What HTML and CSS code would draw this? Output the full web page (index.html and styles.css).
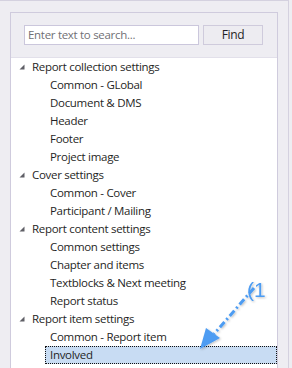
FILE: index.html
```html
<!DOCTYPE html>
<html>
<head>
<meta charset="utf-8">
<link rel="stylesheet" href="styles.css">
</head>
<body>
<div class="frame">
  <div class="panel">
    <div class="search">
      <div class="input">Enter text to search...</div>
      <div class="btn">Find</div>
    </div>
    <div class="tree">
      <div class="row parent"><span class="tri"><svg width="6" height="6" viewBox="0 0 6 6"><polygon points="5.5,0.5 5.5,5.5 0.5,5.5" fill="#5f5f66"/></svg></span>Report collection settings</div>
      <div class="row child">Common - GLobal</div>
      <div class="row child">Document &amp; DMS</div>
      <div class="row child">Header</div>
      <div class="row child">Footer</div>
      <div class="row child">Project image</div>
      <div class="row parent"><span class="tri"><svg width="6" height="6" viewBox="0 0 6 6"><polygon points="5.5,0.5 5.5,5.5 0.5,5.5" fill="#5f5f66"/></svg></span>Cover settings</div>
      <div class="row child">Common - Cover</div>
      <div class="row child">Participant / Mailing</div>
      <div class="row parent"><span class="tri"><svg width="6" height="6" viewBox="0 0 6 6"><polygon points="5.5,0.5 5.5,5.5 0.5,5.5" fill="#5f5f66"/></svg></span>Report content settings</div>
      <div class="row child">Common settings</div>
      <div class="row child">Chapter and items</div>
      <div class="row child">Textblocks &amp; Next meeting</div>
      <div class="row child">Report status</div>
      <div class="row parent"><span class="tri"><svg width="6" height="6" viewBox="0 0 6 6"><polygon points="5.5,0.5 5.5,5.5 0.5,5.5" fill="#5f5f66"/></svg></span>Report item settings</div>
      <div class="row child">Common - Report item</div>
      <div class="row child selected">Involved</div>
    </div>
  </div>
  <svg class="annot" width="80" height="90" viewBox="0 0 80 90">
    <defs>
      <filter id="sh" x="-20%" y="-20%" width="140%" height="140%">
        <feDropShadow dx="1" dy="1" stdDeviation="1" flood-color="#000" flood-opacity="0.25"/>
      </filter>
    </defs>
    <g filter="url(#sh)">
      <line x1="58" y1="12" x2="18" y2="58" stroke="#4d9cf2" stroke-width="3" stroke-dasharray="7 3 2 3"/>
      <polygon points="4,73 10,52 24,62" fill="#4d9cf2"/>
      <text x="51" y="21" class="num">(1</text>
    </g>
  </svg>
</div>
</body>
</html>
```

FILE: styles.css
```css
html, body {
  margin: 0;
  padding: 0;
}
body {
  width: 292px;
  height: 368px;
  background: #eeedf2;
  font-family: "Open Sans", "DejaVu Sans", sans-serif;
  font-size: 11.5px;
  letter-spacing: -0.3px;
  color: #1f1f25;
  overflow: hidden;
}
.frame {
  position: relative;
  width: 288px;
  height: 367px;
  border-top: 1px solid #d4d1df;
  border-right: 1px solid #d4d1df;
  box-sizing: content-box;
}
.panel {
  margin-left: 10px;
  margin-top: 11px;
  width: 266px;
  height: 360px;
  border: 1px solid #cfcbdd;
  border-bottom: none;
  background: #eeedf2;
  display: flex;
  flex-direction: column;
}
.search {
  display: flex;
  gap: 4px;
  padding: 12px 0 12px 13px;
}
.input {
  height: 18px;
  border: 1px solid #cbc7dc;
  background: #fff;
  color: #707075;
  line-height: 18px;
  padding-left: 3px;
  box-sizing: content-box;
  width: 170px;
}
.btn {
  width: 58px;
  height: 18px;
  border: 1px solid #cfcbdc;
  background: #edecf1;
  text-align: center;
  line-height: 18px;
  font-size: 12px;
  color: #1f1f25;
}
.tree {
  flex: 1;
  background: #fff;
  border-top: 1px solid #e2e0ea;
}
.row {
  height: 18px;
  line-height: 18px;
  white-space: nowrap;
  box-sizing: border-box;
}
.parent {
  display: flex;
  align-items: center;
  padding-left: 8px;
}
.tri {
  display: inline-flex;
  width: 13px;
  height: 18px;
  align-items: center;
}
.child {
  padding-left: 39px;
}
.selected {
  margin-left: 34px;
  padding-left: 4px;
  background: #c8dcf3;
  border: 1px dotted #111;
  line-height: 16px;
}
.annot {
  position: absolute;
  left: 196px;
  top: 275px;
  overflow: visible;
}
.num {
  font-family: "Liberation Sans", sans-serif;
  font-size: 21px;
  letter-spacing: 0;
  fill: #4d9cf2;
}
```
